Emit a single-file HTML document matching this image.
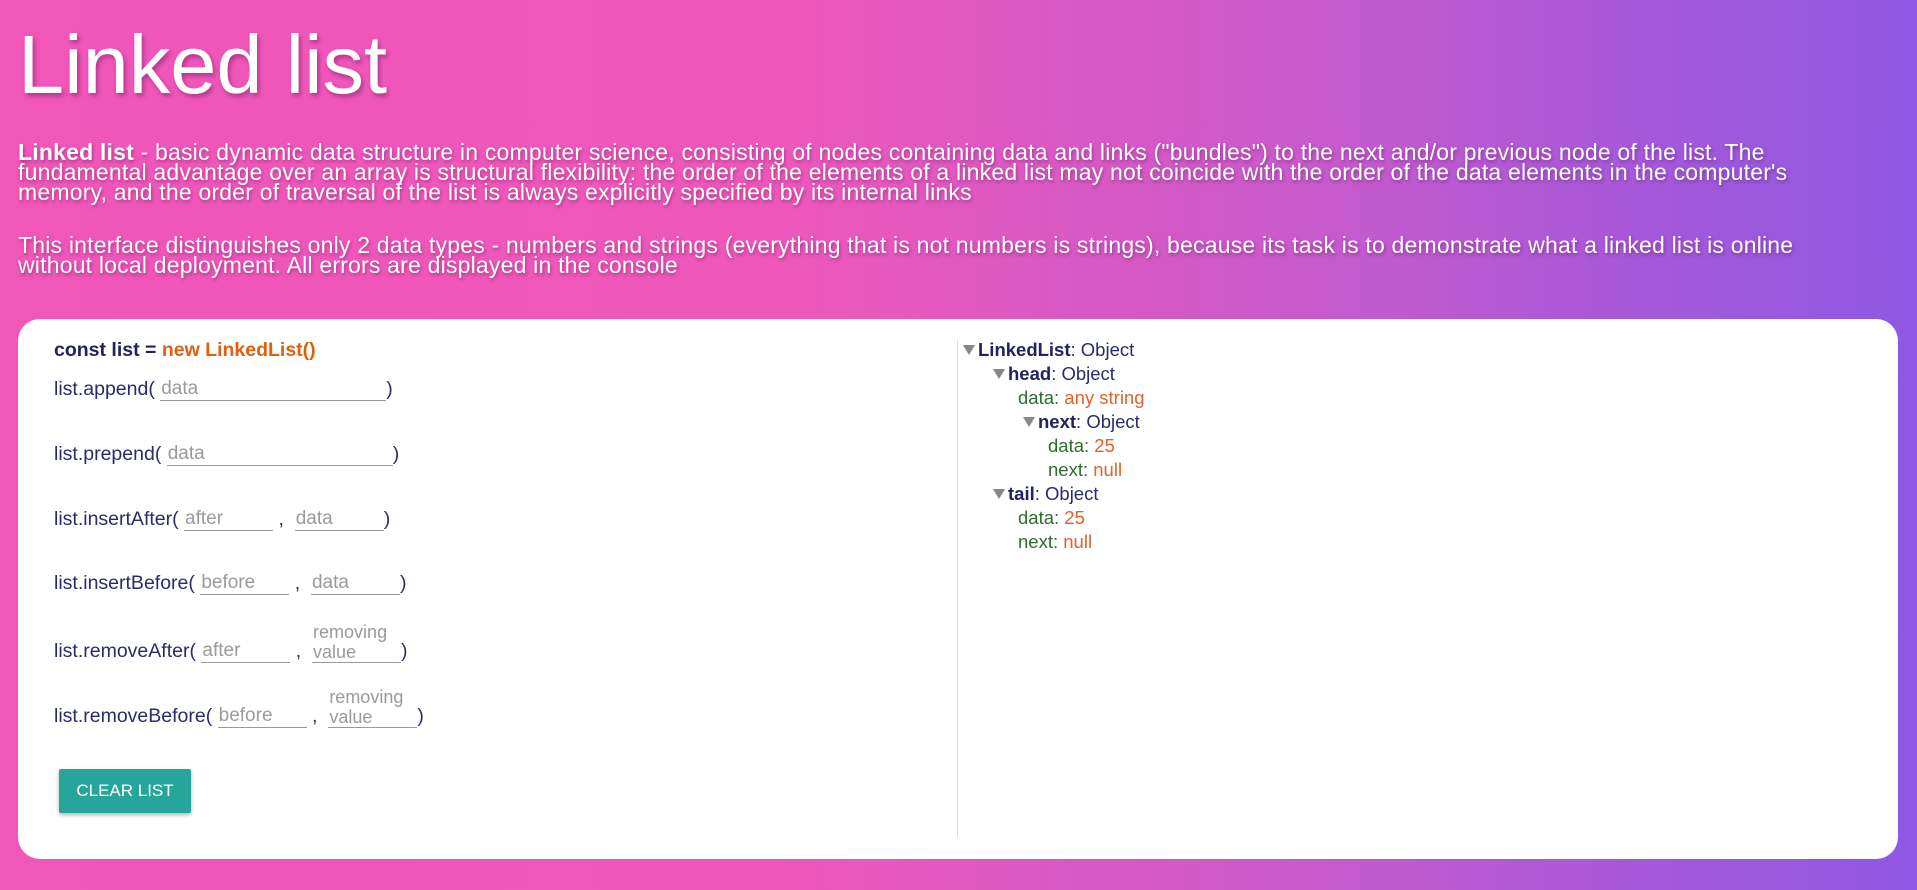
<!DOCTYPE html>
<html><head><meta charset="utf-8"><style>
*{margin:0;padding:0;box-sizing:border-box}
body{width:1917px;height:890px;overflow:hidden;font-family:"Liberation Sans",sans-serif;background:linear-gradient(90deg,#f156b9 0%,#ee57ba 40%,#c95acb 68%,#a758d9 85%,#8e58e4 100%);position:relative}
h1{position:absolute;left:18px;top:17px;font-size:83px;font-weight:normal;color:#fff;text-shadow:2px 3px 5px rgba(90,20,80,.45);letter-spacing:0}
.p{position:absolute;left:18px;color:#fff;font-size:23px;line-height:19.6px;text-shadow:1px 2px 3px rgba(80,20,80,.45);white-space:nowrap;letter-spacing:0.2px}
.card{position:absolute;left:18px;top:319px;width:1880px;height:540px;background:#fff;border-radius:22px}
.div{position:absolute;left:957px;top:340px;width:1px;height:497px;background:#ddd}
.l{position:absolute;left:54px;font-size:19.5px;color:#2b2b6a;white-space:nowrap}
.in{display:inline-block;border-bottom:1px solid #999;color:#9a9a9a;font-size:19px;vertical-align:bottom;line-height:23px;padding-left:1px}
.two{display:inline-block;border-bottom:1px solid #999;color:#9a9a9a;font-size:18px;line-height:20px;vertical-align:bottom;padding-left:1px}
.btn{position:absolute;left:59px;top:769px;width:132px;height:44px;background:#26a69a;color:#fff;font-size:17px;line-height:44px;text-align:center;box-shadow:0 2px 4px rgba(0,0,0,.3);border-radius:2px}
.t{position:absolute;font-size:18.5px;white-space:nowrap;color:#2b2b6a}
.t b{color:#22225f}
.tri{display:inline-block;width:0;height:0;border-left:6px solid transparent;border-right:6px solid transparent;border-top:10px solid #888;margin-right:3px;vertical-align:1px}
.g{color:#2e6b2e}.o{color:#e0622a}
</style></head><body>
<h1>Linked list</h1>
<div class="p" style="top:143px"><b>Linked list</b> - basic dynamic data structure in computer science, consisting of nodes containing data and links ("bundles") to the next and/or previous node of the list. The</div>
<div class="p" style="top:163px">fundamental advantage over an array is structural flexibility: the order of the elements of a linked list may not coincide with the order of the data elements in the computer's</div>
<div class="p" style="top:183px">memory, and the order of traversal of the list is always explicitly specified by its internal links</div>
<div class="p" style="top:236px">This interface distinguishes only 2 data types - numbers and strings (everything that is not numbers is strings), because its task is to demonstrate what a linked list is online</div>
<div class="p" style="top:256px">without local deployment. All errors are displayed in the console</div>
<div class="card"></div>
<div class="div"></div>
<div class="l" style="top:339px;font-weight:bold;color:#22225f">const list = <span style="color:#e0600f">new LinkedList()</span></div>
<div class="l" style="top:377px">list.append( <span class="in" style="width:226px">data</span>)</div>
<div class="l" style="top:442px">list.prepend( <span class="in" style="width:226px">data</span>)</div>
<div class="l" style="top:507px">list.insertAfter( <span class="in" style="width:89px">after</span> , &nbsp;<span class="in" style="width:89px">data</span>)</div>
<div class="l" style="top:571px">list.insertBefore( <span class="in" style="width:89px">before</span> , &nbsp;<span class="in" style="width:89px">data</span>)</div>
<div class="l" style="top:622px">list.removeAfter( <span class="in" style="width:89px">after</span> , &nbsp;<span class="two" style="width:89px">removing<br>value</span>)</div>
<div class="l" style="top:687px">list.removeBefore( <span class="in" style="width:89px">before</span> , &nbsp;<span class="two" style="width:89px">removing<br>value</span>)</div>
<div class="btn">CLEAR LIST</div>
<div class="t" style="left:963px;top:339px"><span class="tri"></span><b>LinkedList</b>: Object</div>
<div class="t" style="left:993px;top:363px"><span class="tri"></span><b>head</b>: Object</div>
<div class="t g" style="left:1018px;top:387px">data: <span class="o">any string</span></div>
<div class="t" style="left:1023px;top:411px"><span class="tri"></span><b>next</b>: Object</div>
<div class="t g" style="left:1048px;top:435px">data: <span class="o">25</span></div>
<div class="t g" style="left:1048px;top:459px">next: <span class="o">null</span></div>
<div class="t" style="left:993px;top:483px"><span class="tri"></span><b>tail</b>: Object</div>
<div class="t g" style="left:1018px;top:507px">data: <span class="o">25</span></div>
<div class="t g" style="left:1018px;top:531px">next: <span class="o">null</span></div>
</body></html>
